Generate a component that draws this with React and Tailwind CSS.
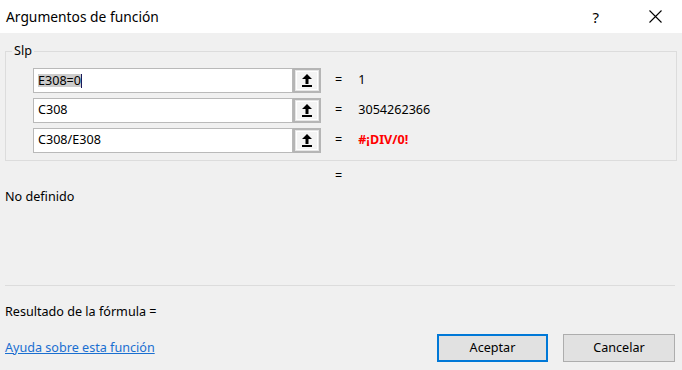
import React from "react";

const font = { fontFamily: '"Noto Sans", "Segoe UI", sans-serif' };

function RefButton() {
  return (
    <div className="w-[28px] h-[25px] border-2 border-[#b5b5b5] bg-[#e6e6e6] flex items-center justify-center">
      <div className="w-[22px] h-[19px] bg-[#f4f4f4] border border-white flex items-center justify-center">
        <svg width="10" height="13" viewBox="0 0 10 13">
          <polygon points="5,0 10,5 6.5,5 6.5,10 3.5,10 3.5,5 0,5" fill="#000" />
          <rect x="0" y="11" width="10" height="2" fill="#000" />
        </svg>
      </div>
    </div>
  );
}

function ArgRow({ value, result, selected, error }) {
  return (
    <div className="flex items-center h-[25px]">
      <div className="ml-[27px] w-[260px] h-[25px] bg-white border border-[#b9b9b9] flex items-center pl-[4px] text-[12.6px] text-black">
        {selected ? (
          <span className="flex items-center">
            <span className="bg-[#cccccc] leading-[13px]">{value}</span>
            <span className="w-[1px] h-[14px] bg-[#1a1a5a]" />
          </span>
        ) : (
          <span>{value}</span>
        )}
      </div>
      <RefButton />
      <span className="ml-[14px] text-[12.6px] text-black">=</span>
      <span
        className={
          "ml-[16px] text-[12.6px] " +
          (error ? "text-[#ff0000] font-bold" : "text-black")
        }
      >
        {result}
      </span>
    </div>
  );
}

export default function App() {
  return (
    <div
      className="w-[682px] h-[370px] bg-[#f0f0f0] flex flex-col text-black overflow-hidden"
      style={font}
    >
      <div className="h-[33px] bg-white flex items-center shrink-0">
        <span className="ml-[6px] text-[13.8px] leading-[20px] text-black">Argumentos de función</span>
        <span className="ml-auto mr-[50px] text-[15px] leading-[20px] text-black">?</span>
        <svg className="mr-[20px]" width="13" height="13" viewBox="0 0 13 13">
          <path d="M0.5 0.5 L12.5 12.5 M12.5 0.5 L0.5 12.5" stroke="#000" strokeWidth="1.1" fill="none" />
        </svg>
      </div>

      <fieldset className="mx-[5px] mt-[10px] h-[118px] border border-[#dcdcdc] shrink-0">
        <legend className="ml-[6px] px-[2px] text-[12.6px] leading-[16px]">Slp</legend>
        <div className="mt-[9px] flex flex-col gap-[5px]">
          <ArgRow value="E308=0" result="1" selected />
          <ArgRow value="C308" result="3054262366" />
          <ArgRow value="C308/E308" result="#¡DIV/0!" error />
        </div>
      </fieldset>

      <div className="mt-[7px] h-[16px] text-[12.6px] leading-[16px] pl-[335px]">=</div>
      <div className="mt-[5px] pl-[5px] text-[12.6px] leading-[16px]">No definido</div>

      <div className="mt-[80px] mx-[5px] mr-[7px] h-[1px] bg-[#dcdcdc]" />

      <div className="mt-[18px] pl-[5px] text-[12.6px] leading-[16px]">Resultado de la fórmula =</div>

      <div className="mt-[14px] flex items-center pl-[5px] pr-[7px]">
        <a className="text-[12.6px] leading-[16px] text-[#1a6fd0] underline">Ayuda sobre esta función</a>
        <button className="ml-auto w-[111px] h-[28px] bg-[#e1e1e1] border-2 border-[#0078d7] text-[12.6px] text-black">
          Aceptar
        </button>
        <button className="ml-[15px] w-[112px] h-[28px] bg-[#e1e1e1] border border-[#adadad] text-[12.6px] text-black">
          Cancelar
        </button>
      </div>
    </div>
  );
}
